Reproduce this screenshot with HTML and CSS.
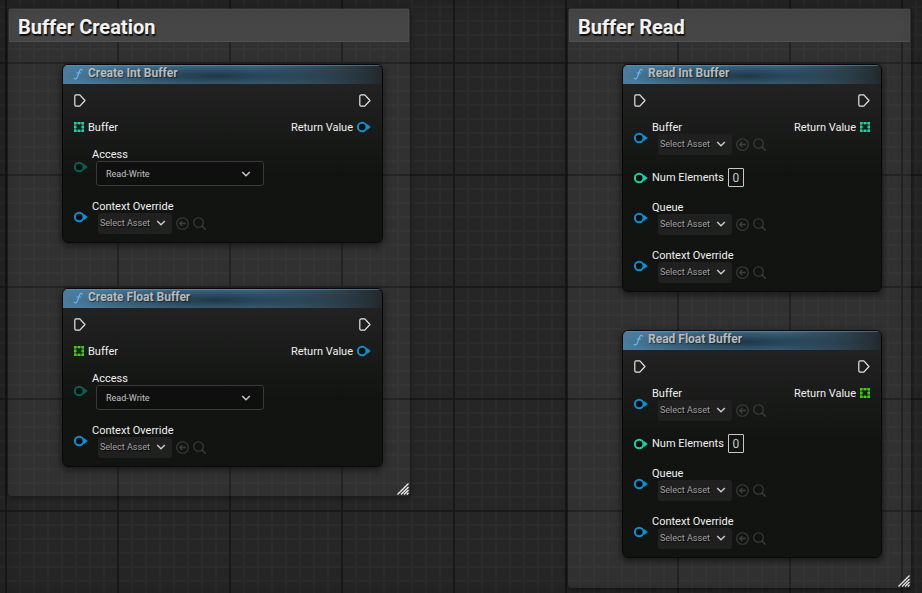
FILE: index.html
```html
<!DOCTYPE html>
<html lang="en">
<head>
<meta charset="utf-8">
<title>Buffer graph</title>
<link rel="stylesheet" href="styles.css">
</head>
<body>
<svg class="defs" aria-hidden="true">
  <symbol id="exec" viewBox="0 0 12 13"><path d="M.8 2.2q0-1.4 1.4-1.4h3.6L11 6.5 5.8 12.2H2.2q-1.4 0-1.4-1.4z" fill="none" stroke="#e6e6e6" stroke-width="1.2" stroke-linejoin="round"/></symbol>
  <symbol id="pin" viewBox="0 0 14 12"><circle cx="5.2" cy="6" r="4.3" fill="#080d0d" stroke="currentColor" stroke-width="2"/><path d="M10 3 13.8 6 10 9z" fill="currentColor"/></symbol>
  <symbol id="array" viewBox="0 0 10 10"><path d="M0 0h2.6v2.6H0zM3.7 0h2.6v2.6H3.7zM7.4 0H10v2.6H7.4zM0 3.7h2.6v2.6H0zM7.4 3.7H10v2.6H7.4zM0 7.4h2.6V10H0zM3.7 7.4h2.6V10H3.7zM7.4 7.4H10V10H7.4z" fill="currentColor"/><path d="M1 1h8v8H1z" fill="none" stroke="currentColor" stroke-opacity=".5" stroke-width="1.6"/></symbol>
  <symbol id="fn" viewBox="0 0 12 13"><path d="M10.2 2.3C9.8 1 8.1.9 7.3 3L4.6 10.2C3.9 12 2.4 12.2 1.4 11.4" fill="none" stroke="#6cb4e6" stroke-width="1.4" stroke-linecap="round"/><path d="M3.6 5.3h5" stroke="#6cb4e6" stroke-width="1.1"/></symbol>
  <symbol id="chev" viewBox="0 0 10 6"><path d="M1.2 1 5 4.7 8.8 1" fill="none" stroke="currentColor" stroke-width="1.5"/></symbol>
  <symbol id="use" viewBox="0 0 13 13"><circle cx="6.5" cy="6.5" r="5.8" fill="none" stroke="currentColor" stroke-width="1.1"/><path d="M10 6.5H4M6.2 4 3.7 6.5 6.2 9" fill="none" stroke="currentColor" stroke-width="1.3"/></symbol>
  <symbol id="find" viewBox="0 0 13 13"><circle cx="5.5" cy="5.5" r="4.8" fill="none" stroke="currentColor" stroke-width="1.1"/><path d="m9 9 3.7 3.7" stroke="currentColor" stroke-width="1.3"/></symbol>
  <symbol id="grip" viewBox="0 0 12 12"><path d="M.5 11.5l11-11M4 11.5 11.5 4M7 11.5 11.5 7M9.8 11.5l1.7-1.7" stroke="#f0f0f0" stroke-width="1.3"/></symbol>
</svg>

<main class="canvas">
  <section class="comment creation">
    <h1>Buffer Creation</h1>
    <svg class="grip"><use href="#grip"/></svg>
  </section>
  <section class="comment read">
    <h1>Buffer Read</h1>
    <svg class="grip"><use href="#grip"/></svg>
  </section>

  <article class="node create-int">
    <h2><svg class="fn"><use href="#fn"/></svg>Create Int Buffer</h2>
    <div class="body">
      <div class="col">
        <div class="row flow"><svg class="exec"><use href="#exec"/></svg></div>
        <div class="row flat int"><svg class="array"><use href="#array"/></svg><span class="name">Buffer</span></div>
        <div class="row enum"><svg class="pin"><use href="#pin"/></svg><div class="field"><label class="name" for="a1">Access</label><div class="combo"><select id="a1"><option>Read-Write</option></select><svg class="chev"><use href="#chev"/></svg></div></div></div>
        <div class="row object"><svg class="pin"><use href="#pin"/></svg><div class="field"><span class="name">Context Override</span><div class="asset"><button class="pick" type="button">Select Asset<svg class="chev"><use href="#chev"/></svg></button><button class="tool" type="button" aria-label="Use selected"><svg><use href="#use"/></svg></button><button class="tool" type="button" aria-label="Browse"><svg><use href="#find"/></svg></button></div></div></div>
      </div>
      <div class="col out">
        <div class="row flow"><svg class="exec"><use href="#exec"/></svg></div>
        <div class="row flat object"><span class="name">Return Value</span><svg class="pin"><use href="#pin"/></svg></div>
      </div>
    </div>
  </article>

  <article class="node create-float">
    <h2><svg class="fn"><use href="#fn"/></svg>Create Float Buffer</h2>
    <div class="body">
      <div class="col">
        <div class="row flow"><svg class="exec"><use href="#exec"/></svg></div>
        <div class="row flat float"><svg class="array"><use href="#array"/></svg><span class="name">Buffer</span></div>
        <div class="row enum"><svg class="pin"><use href="#pin"/></svg><div class="field"><label class="name" for="a2">Access</label><div class="combo"><select id="a2"><option>Read-Write</option></select><svg class="chev"><use href="#chev"/></svg></div></div></div>
        <div class="row object"><svg class="pin"><use href="#pin"/></svg><div class="field"><span class="name">Context Override</span><div class="asset"><button class="pick" type="button">Select Asset<svg class="chev"><use href="#chev"/></svg></button><button class="tool" type="button" aria-label="Use selected"><svg><use href="#use"/></svg></button><button class="tool" type="button" aria-label="Browse"><svg><use href="#find"/></svg></button></div></div></div>
      </div>
      <div class="col out">
        <div class="row flow"><svg class="exec"><use href="#exec"/></svg></div>
        <div class="row flat object"><span class="name">Return Value</span><svg class="pin"><use href="#pin"/></svg></div>
      </div>
    </div>
  </article>

  <article class="node read-int">
    <h2><svg class="fn"><use href="#fn"/></svg>Read Int Buffer</h2>
    <div class="body">
      <div class="col">
        <div class="row flow"><svg class="exec"><use href="#exec"/></svg></div>
        <div class="row object"><svg class="pin"><use href="#pin"/></svg><div class="field"><span class="name">Buffer</span><div class="asset"><button class="pick" type="button">Select Asset<svg class="chev"><use href="#chev"/></svg></button><button class="tool" type="button" aria-label="Use selected"><svg><use href="#use"/></svg></button><button class="tool" type="button" aria-label="Browse"><svg><use href="#find"/></svg></button></div></div></div>
        <div class="row int"><svg class="pin"><use href="#pin"/></svg><label for="n1">Num Elements</label><input id="n1" type="text" value="0"></div>
        <div class="row object"><svg class="pin"><use href="#pin"/></svg><div class="field"><span class="name">Queue</span><div class="asset"><button class="pick" type="button">Select Asset<svg class="chev"><use href="#chev"/></svg></button><button class="tool" type="button" aria-label="Use selected"><svg><use href="#use"/></svg></button><button class="tool" type="button" aria-label="Browse"><svg><use href="#find"/></svg></button></div></div></div>
        <div class="row object"><svg class="pin"><use href="#pin"/></svg><div class="field"><span class="name">Context Override</span><div class="asset"><button class="pick" type="button">Select Asset<svg class="chev"><use href="#chev"/></svg></button><button class="tool" type="button" aria-label="Use selected"><svg><use href="#use"/></svg></button><button class="tool" type="button" aria-label="Browse"><svg><use href="#find"/></svg></button></div></div></div>
      </div>
      <div class="col out">
        <div class="row flow"><svg class="exec"><use href="#exec"/></svg></div>
        <div class="row flat int"><span class="name">Return Value</span><svg class="array"><use href="#array"/></svg></div>
      </div>
    </div>
  </article>

  <article class="node read-float">
    <h2><svg class="fn"><use href="#fn"/></svg>Read Float Buffer</h2>
    <div class="body">
      <div class="col">
        <div class="row flow"><svg class="exec"><use href="#exec"/></svg></div>
        <div class="row object"><svg class="pin"><use href="#pin"/></svg><div class="field"><span class="name">Buffer</span><div class="asset"><button class="pick" type="button">Select Asset<svg class="chev"><use href="#chev"/></svg></button><button class="tool" type="button" aria-label="Use selected"><svg><use href="#use"/></svg></button><button class="tool" type="button" aria-label="Browse"><svg><use href="#find"/></svg></button></div></div></div>
        <div class="row int"><svg class="pin"><use href="#pin"/></svg><label for="n2">Num Elements</label><input id="n2" type="text" value="0"></div>
        <div class="row object"><svg class="pin"><use href="#pin"/></svg><div class="field"><span class="name">Queue</span><div class="asset"><button class="pick" type="button">Select Asset<svg class="chev"><use href="#chev"/></svg></button><button class="tool" type="button" aria-label="Use selected"><svg><use href="#use"/></svg></button><button class="tool" type="button" aria-label="Browse"><svg><use href="#find"/></svg></button></div></div></div>
        <div class="row object"><svg class="pin"><use href="#pin"/></svg><div class="field"><span class="name">Context Override</span><div class="asset"><button class="pick" type="button">Select Asset<svg class="chev"><use href="#chev"/></svg></button><button class="tool" type="button" aria-label="Use selected"><svg><use href="#use"/></svg></button><button class="tool" type="button" aria-label="Browse"><svg><use href="#find"/></svg></button></div></div></div>
      </div>
      <div class="col out">
        <div class="row flow"><svg class="exec"><use href="#exec"/></svg></div>
        <div class="row flat float"><span class="name">Return Value</span><svg class="array"><use href="#array"/></svg></div>
      </div>
    </div>
  </article>
</main>
</body>
</html>
```
FILE: styles.css
```css
* { box-sizing: border-box; }
body { margin: 0; font-family: Roboto, "Liberation Sans", sans-serif; font-size: 11px; line-height: 14px; color: #f0f0f0; }
svg { display: block; flex: none; }
.defs { position: absolute; width: 0; height: 0; }

/* Graph canvas: major lines every 112px, minor every 14px */
.canvas {
  position: relative;
  height: 100vh;
  overflow: hidden;
  background-color: #262626;
  background-image:
    linear-gradient(90deg, #191919 2px, transparent 2px),
    linear-gradient(#191919 2px, transparent 2px),
    linear-gradient(90deg, #2b2b2b 2px, transparent 2px),
    linear-gradient(#2b2b2b 2px, transparent 2px);
  background-size: 112px 112px, 112px 112px, 14px 14px, 14px 14px;
  background-position: 5px 62px;
}
.canvas::after {
  content: "";
  position: absolute;
  inset: 0;
  pointer-events: none;
  box-shadow: inset 0 0 24px rgba(0, 0, 0, .2);
}

.comment { position: absolute; padding: 1px; background: rgba(255, 255, 255, .05); border-radius: 3px; box-shadow: 0 1px 5px 1px rgba(0, 0, 0, .45); }
.comment h1 { margin: 0; padding: 4px 8px; font-size: 20px; line-height: 27px; font-weight: 700; color: #f2f2f2; background: #464646; border: 1px solid #4c4c4c; border-bottom-color: #505050; text-shadow: 1px 2px 1px #0c0c0c; height: 33px; }
.creation { left: 8px; top: 8px; width: 402px; height: 488px; }
.read { left: 568px; top: 8px; width: 343px; height: 580px; }
.grip { position: absolute; right: 1px; bottom: 1px; width: 12px; height: 12px; }

.node { position: absolute; border: 1px solid #080808; border-radius: 6px; overflow: hidden; background: linear-gradient(rgba(32, 33, 32, .96) 20px, rgba(16, 18, 16, .95) 110px); box-shadow: 0 2px 6px 1px rgba(0, 0, 0, .5); }
.create-int { left: 62px; top: 64px; width: 321px; }
.create-float { left: 62px; top: 288px; width: 321px; }
.read-int { left: 622px; top: 64px; width: 260px; }
.read-float { left: 622px; top: 330px; width: 260px; }

h2 { margin: 0; height: 19px; padding: 0 11px 2px 10px; display: flex; align-items: center; gap: 4px; font-size: 12px; line-height: 17px; font-weight: 700; color: #b9bcbe; text-shadow: 1px 1px 1px rgba(0, 0, 0, .5);
  background: radial-gradient(ellipse 48% 75% at 48% 58%, rgba(20, 40, 52, .8), rgba(20, 40, 52, .45) 45%, transparent), linear-gradient(90deg, #4b7c9d 0, #467290 60%, #22292d 100%);
  box-shadow: inset 0 1px 0 rgba(110, 160, 192, .5); }
.fn { width: 11px; height: 12px; }

.body { display: flex; justify-content: space-between; padding: 9px 11px 8px; }
.col { display: flex; flex-direction: column; gap: 13px; }
.out { align-items: flex-end; }
.row { display: flex; align-items: center; gap: 4px; }
.flow { height: 14px; }
.flat { height: 14px; }
.exec { width: 12px; height: 13px; }
.pin { width: 14px; height: 12px; }
.array { width: 10px; height: 10px; }
.object svg.pin { color: #0d8fd0; }
.enum svg.pin { color: #0a5f54; }
.int > svg { color: #1fd0a0; }
.float > svg { color: #3fd00c; }

.field { display: flex; flex-direction: column; }
.name { height: 14px; line-height: 16px; }
.combo { display: grid; align-items: center; margin-left: 4px; width: 168px; }
.combo > * { grid-area: 1 / 1; }
.combo select { appearance: none; width: 100%; height: 25px; padding: 0 9px; border: 1px solid #3a3a3a; border-radius: 3px; background: #0f0f0f; color: #c4c4c4; font: 9px/14px Roboto, sans-serif; }
.combo .chev { justify-self: end; margin-right: 13px; pointer-events: none; }
.chev { width: 10px; height: 6px; color: #c8c8c8; }
.asset { display: flex; align-items: center; gap: 4px; margin-left: 6px; }
button { border: 0; margin: 0; padding: 0; background: none; color: inherit; font-family: inherit; }
.pick { display: flex; align-items: center; justify-content: space-between; width: 74px; height: 21px; padding: 0 6px 1px 2px; border-radius: 3px; background: #1f201f; color: #a4a4a4; font-size: 9px; text-shadow: 1px 1px 1px #000; }
.tool { color: #3d3e3d; }
.tool svg { width: 13px; height: 13px; }
input { width: 16px; height: 19px; padding: 0; border: 1px solid #c8c8c8; border-radius: 1px; background: transparent; color: #c8c8c8; font: 12px/14px Roboto, sans-serif; text-align: center; }
```
